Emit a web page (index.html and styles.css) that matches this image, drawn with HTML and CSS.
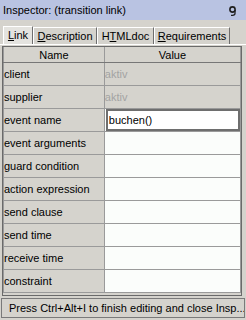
FILE: index.html
```html
<!DOCTYPE html>
<html>
<head>
<link rel="stylesheet" href="styles.css">
</head>
<body>
<div class="title">
    <span>Inspector: (transition link)</span>
    <svg class="pin" width="9" height="10" viewBox="0 0 9 10">
        <circle cx="4.5" cy="3.5" r="2.6" fill="none" stroke="#202020" stroke-width="1.6"/>
        <path d="M7 4 L7 7.5 Q7 9.3 4.5 9.3 L3 9.3" fill="none" stroke="#202020" stroke-width="1.3"/>
    </svg>
</div>
<div class="tabs">
    <div class="tab selected link"><u>L</u>ink</div>
    <div class="tab desc"><u>D</u>escription</div>
    <div class="tab html">H<u>T</u>MLdoc</div>
    <div class="tab req"><u>R</u>equirements</div>
</div>
<div class="panel">
    <div class="scroll">
    <table class="grid">
        <tr class="head"><th>Name</th><th>Value</th></tr>
        <tr><td class="name">client</td><td class="ro">aktiv</td></tr>
        <tr><td class="name">supplier</td><td class="ro">aktiv</td></tr>
        <tr><td class="name">event name</td><td class="val"><div class="field">buchen()</div></td></tr>
        <tr><td class="name">event arguments</td><td class="val"></td></tr>
        <tr><td class="name">guard condition</td><td class="val"></td></tr>
        <tr><td class="name">action expression</td><td class="val"></td></tr>
        <tr><td class="name">send clause</td><td class="val"></td></tr>
        <tr><td class="name">send time</td><td class="val"></td></tr>
        <tr><td class="name">receive time</td><td class="val"></td></tr>
        <tr><td class="name">constraint</td><td class="val"></td></tr>
    </table>
    </div>
</div>
<div class="status">Press Ctrl+Alt+I to finish editing and close Insp...</div>
</body>
</html>
```

FILE: styles.css
```css
body
{
    margin: 0;
    width: 246px;
    height: 320px;
    overflow: hidden;
    background-color: #d5d3cd;
    font-family: "Liberation Sans", Arial, sans-serif;
    font-size: 11px;
    color: #000;
}

.title
{
    height: 20px;
    background-color: #b9c3e2;
    display: flex;
    align-items: center;
    justify-content: space-between;
    padding: 0 9px 0 3px;
}

.pin
{
    margin-top: 1px;
}

.tabs
{
    height: 24px;
    display: flex;
    align-items: flex-end;
    padding-left: 3px;
    box-sizing: border-box;
}

.tab
{
    height: 17px;
    line-height: 16px;
    text-align: center;
    box-sizing: border-box;
    border-top: 1px solid #fff;
    border-left: 1px solid #fff;
    border-right: 1px solid #6e6e6e;
}

.tab.selected
{
    height: 18px;
    background-color: #e4e3df;
}

.link { width: 30px; }
.desc { width: 64px; }
.html { width: 57px; }
.req { width: 76px; }

.panel
{
    border-top: 1px solid #fff;
    padding: 1px 2px 0 2px;
    height: 252px;
    box-sizing: border-box;
}

.scroll
{
    width: 240px;
    height: 250px;
    box-sizing: border-box;
    border: 1px solid #6a6a6a;
}

.grid
{
    border-collapse: collapse;
    border-spacing: 0;
    table-layout: fixed;
}

.grid th
{
    height: 15px;
    padding: 0;
    font-weight: normal;
    text-align: center;
    border-left: 1px solid #9a9a9a;
    border-bottom: 1px solid #777;
}

.grid th:first-child
{
    width: 100px;
}

.grid th:last-child
{
    width: 136px;
    border-right: 1px solid #9a9a9a;
}

.grid td
{
    height: 22px;
    padding: 0;
    border-left: 1px solid #9a9a9a;
    border-bottom: 1px solid #9a9a9a;
    white-space: nowrap;
}

.grid td:last-child
{
    border-right: 1px solid #9a9a9a;
}

.name
{
    padding-left: 1px;
}

.ro
{
    color: #a3a3a3;
    padding-left: 1px;
}

.val
{
    background-color: #fbfdfb;
}

.field
{
    height: 22px;
    margin-left: 1px;
    box-sizing: border-box;
    border: 2px solid #6e6e6e;
    background-color: #fff;
    padding-left: 1px;
    line-height: 18px;
}

.status
{
    margin: 2px 1px 0 1px;
    height: 20px;
    box-sizing: border-box;
    border: 1px solid #7a7a7a;
    padding-left: 7px;
    line-height: 19px;
    white-space: nowrap;
    overflow: hidden;
}
```
